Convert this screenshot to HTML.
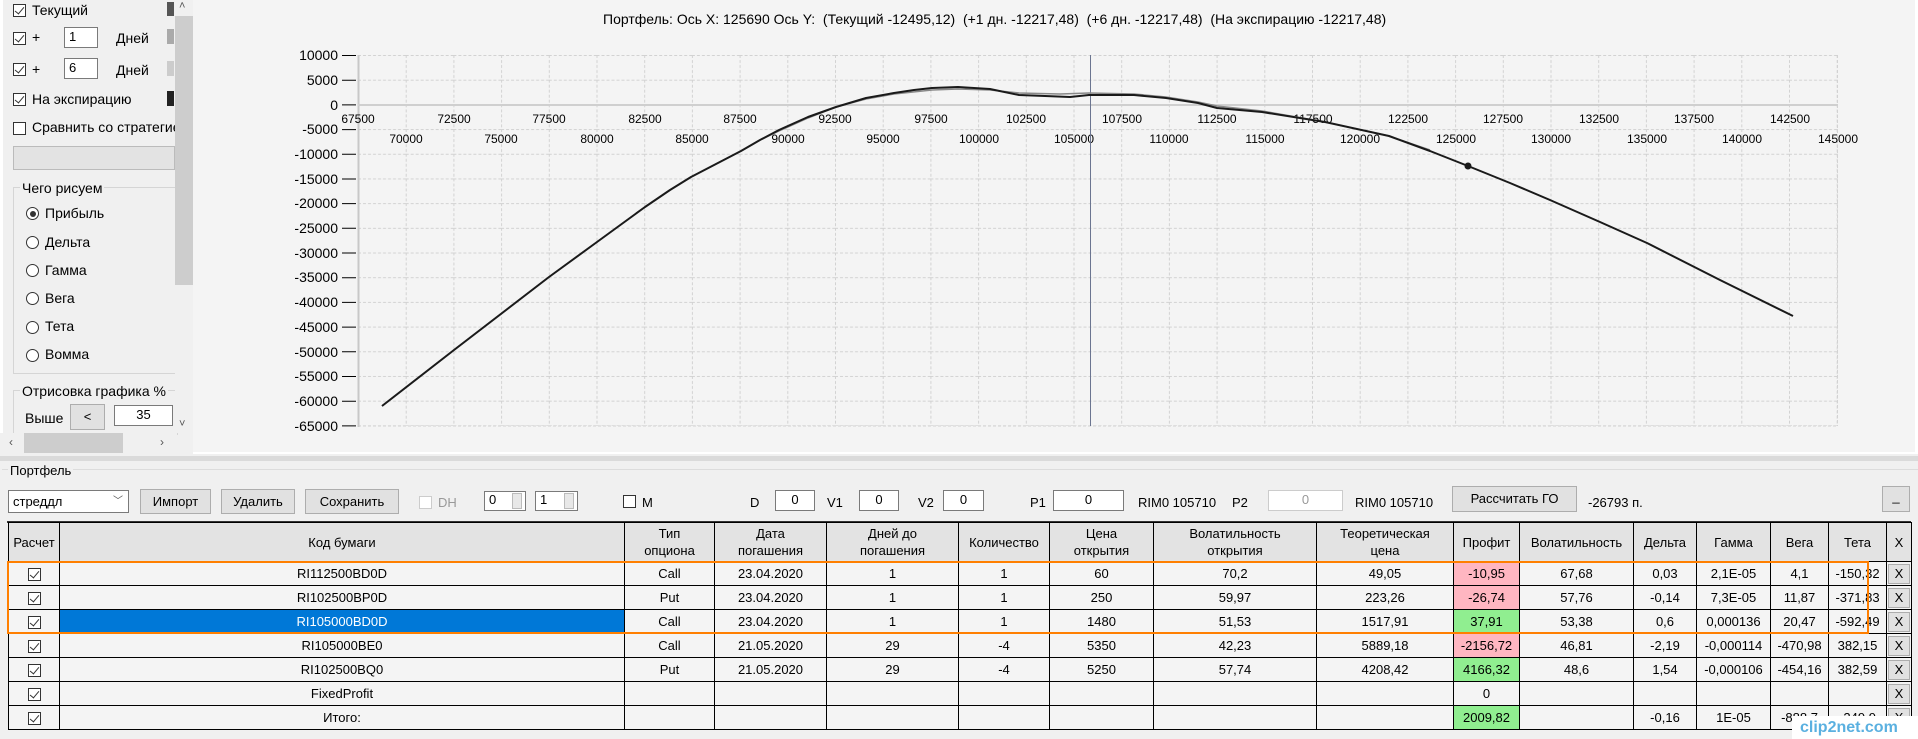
<!DOCTYPE html>
<html><head><meta charset="utf-8"><style>
*{box-sizing:border-box;margin:0;padding:0}
body{width:1918px;height:739px;background:#f0f0f0;font-family:"Liberation Sans",sans-serif;font-size:13px;color:#000;position:relative;overflow:hidden}
.a{position:absolute}
.cb{position:absolute;width:13px;height:13px;border:1px solid #333;background:#fff}
.cb.c::after{content:"";position:absolute;left:3px;top:0px;width:4px;height:8px;border:solid #333;border-width:0 1.3px 1.3px 0;transform:rotate(40deg)}
.rb{position:absolute;width:13px;height:13px;border:1px solid #333;border-radius:50%;background:#fff}
.rb.c::after{content:"";position:absolute;left:2.5px;top:2.5px;width:6px;height:6px;border-radius:50%;background:#333}
.tb{position:absolute;border:1px solid #7a7a7a;background:#fff;font-size:13px;padding-left:4px;line-height:18px}
.btn{position:absolute;border:1px solid #adadad;background:#e1e1e1;text-align:center;font-size:13px}
table{position:absolute;left:8px;top:522px;border-collapse:collapse;table-layout:fixed;font-size:13px}
td{border:1px solid #000;text-align:center;height:24px;background:#f4f4f4;white-space:nowrap;overflow:hidden;padding:0}
tr.h td{background:#e3e3e3;height:39px;line-height:17px}
td.r{background:#ffb6c1}td.g{background:#90ee90}td.s{background:#0078d7;color:#fff}
.ck{display:inline-block;width:13px;height:13px;border:1px solid #333;background:#fff;position:relative;vertical-align:middle}
.ck::after{content:"";position:absolute;left:3px;top:0;width:4px;height:8px;border:solid #333;border-width:0 1.2px 1.2px 0;transform:rotate(40deg)}
.xb{display:block;margin:1px auto;width:22px;height:20px;background:#e1e1e1;border:1px solid #adadad;line-height:18px}
</style></head><body>
<div class="a" style="left:0;top:0;width:175px;height:433px;background:#f0f0f0;border-left:3px solid #fff"></div>
<div class="cb c" style="left:13px;top:4px"></div><div class="a" style="left:32px;top:2px;font-size:14px">Текущий</div>
<div class="a" style="left:167px;top:2px;width:7px;height:14px;background:#555"></div>
<div class="cb c" style="left:13px;top:32px"></div><div class="a" style="left:32px;top:29px;font-size:14px">+</div>
<div class="tb" style="left:64px;top:27px;width:34px;height:21px">1</div><div class="a" style="left:116px;top:30px;font-size:14px">Дней</div>
<div class="a" style="left:167px;top:29px;width:7px;height:15px;background:#aaa"></div>
<div class="cb c" style="left:13px;top:63px"></div><div class="a" style="left:32px;top:61px;font-size:14px">+</div>
<div class="tb" style="left:64px;top:58px;width:34px;height:21px">6</div><div class="a" style="left:116px;top:62px;font-size:14px">Дней</div>
<div class="a" style="left:167px;top:61px;width:7px;height:15px;background:#ccc"></div>
<div class="cb c" style="left:13px;top:93px"></div><div class="a" style="left:32px;top:91px;font-size:14px">На экспирацию</div>
<div class="a" style="left:167px;top:91px;width:7px;height:15px;background:#222"></div>
<div class="cb" style="left:13px;top:122px"></div><div class="a" style="left:32px;top:119px;font-size:14px;white-space:nowrap;width:143px;overflow:hidden">Сравнить со стратегией</div>
<div class="a" style="left:13px;top:146px;width:162px;height:24px;background:#e3e3e3;border:1px solid #bbb"></div>
<div class="a" style="left:13px;top:187px;width:165px;height:187px;border:1px solid #d5d5d5"></div>
<div class="a" style="left:20px;top:180px;background:#f0f0f0;padding:0 2px;font-size:14px">Чего рисуем</div>
<div class="rb c" style="left:26px;top:207px"></div><div class="a" style="left:45px;top:205px;font-size:14px">Прибыль</div>
<div class="rb" style="left:26px;top:236px"></div><div class="a" style="left:45px;top:234px;font-size:14px">Дельта</div>
<div class="rb" style="left:26px;top:264px"></div><div class="a" style="left:45px;top:262px;font-size:14px">Гамма</div>
<div class="rb" style="left:26px;top:292px"></div><div class="a" style="left:45px;top:290px;font-size:14px">Вега</div>
<div class="rb" style="left:26px;top:321px"></div><div class="a" style="left:45px;top:318px;font-size:14px">Тета</div>
<div class="rb" style="left:26px;top:349px"></div><div class="a" style="left:45px;top:346px;font-size:14px">Вомма</div>
<div class="a" style="left:13px;top:390px;width:165px;height:45px;border:1px solid #d5d5d5;border-bottom:none"></div>
<div class="a" style="left:20px;top:383px;background:#f0f0f0;padding:0 2px;font-size:14px">Отрисовка графика %</div>
<div class="a" style="left:25px;top:410px;font-size:14px">Выше</div>
<div class="btn" style="left:70px;top:404px;width:35px;height:26px;line-height:24px">&lt;</div>
<div class="tb" style="left:114px;top:405px;width:59px;height:21px;text-align:center;padding:0">35</div>
<div class="a" style="left:175px;top:0;width:18px;height:433px;background:#f0f0f0"></div>
<div class="a" style="left:175px;top:16px;width:18px;height:269px;background:#cdcdcd"></div>
<div class="a" style="left:179px;top:0;font-size:11px;color:#555">˄</div>
<div class="a" style="left:179px;top:418px;font-size:11px;color:#555">˅</div>
<div class="a" style="left:3px;top:433px;width:172px;height:20px;background:#f0f0f0"></div>
<div class="a" style="left:24px;top:433px;width:99px;height:20px;background:#cdcdcd"></div>
<div class="a" style="left:9px;top:435px;font-size:12px;color:#555">‹</div>
<div class="a" style="left:160px;top:435px;font-size:12px;color:#555">›</div>
<div class="a" style="left:193px;top:0;width:1725px;height:454px;background:#f4f4f4;border-right:3px solid #fff;border-bottom:2px solid #fff"></div>
<div class="a" style="left:603px;top:11px;font-size:14px;white-space:pre">Портфель: Ось X: 125690 Ось Y:  (Текущий -12495,12)  (+1 дн. -12217,48)  (+6 дн. -12217,48)  (На экспирацию -12217,48)</div>
<svg class="a" style="left:0;top:0" width="1918" height="454" font-family="Liberation Sans, sans-serif">
<defs><pattern id="g" x="358" y="55" width="47.7" height="24.69" patternUnits="userSpaceOnUse"><path d="M0.5,0V24.69M0,0.5H47.7" stroke="#d2d2d2" stroke-width="1" stroke-dasharray="3,2" fill="none"/></pattern></defs>
<rect x="358" y="55" width="1480" height="371" fill="url(#g)"/>
<line x1="1837.5" y1="55" x2="1837.5" y2="426" stroke="#d2d2d2" stroke-dasharray="3,2"/>
<line x1="358" y1="426" x2="1838" y2="426" stroke="#d2d2d2" stroke-dasharray="3,2"/>
<line x1="358.5" y1="55" x2="358.5" y2="427" stroke="#c8c8c8" stroke-width="2"/>
<line x1="358" y1="105" x2="1838" y2="105" stroke="#cfcfcf" stroke-width="2"/>
<g stroke="#000" stroke-width="1">
<path d="M342,55.5H356M342,80.2H356M342,104.9H356M342,129.6H356M342,154.3H356M342,179H356M342,203.6H356M342,228.3H356M342,253H356M342,277.7H356M342,302.4H356M342,327.1H356M342,351.8H356M342,376.5H356M342,401.2H356M342,425.9H356"/>
</g>
<g font-size="14" text-anchor="end">
<text x="338" y="60">10000</text><text x="338" y="85">5000</text><text x="338" y="110">0</text><text x="338" y="134">-5000</text><text x="338" y="159">-10000</text><text x="338" y="184">-15000</text><text x="338" y="208">-20000</text><text x="338" y="233">-25000</text><text x="338" y="258">-30000</text><text x="338" y="282">-35000</text><text x="338" y="307">-40000</text><text x="338" y="332">-45000</text><text x="338" y="357">-50000</text><text x="338" y="381">-55000</text><text x="338" y="406">-60000</text><text x="338" y="431">-65000</text>
</g>
<g font-size="12" text-anchor="middle">
<text x="358" y="123">67500</text><text x="454" y="123">72500</text><text x="549" y="123">77500</text><text x="645" y="123">82500</text><text x="740" y="123">87500</text><text x="835" y="123">92500</text><text x="931" y="123">97500</text><text x="1026" y="123">102500</text><text x="1122" y="123">107500</text><text x="1217" y="123">112500</text><text x="1313" y="123">117500</text><text x="1408" y="123">122500</text><text x="1503" y="123">127500</text><text x="1599" y="123">132500</text><text x="1694" y="123">137500</text><text x="1790" y="123">142500</text>
<text x="406" y="143">70000</text><text x="501" y="143">75000</text><text x="597" y="143">80000</text><text x="692" y="143">85000</text><text x="788" y="143">90000</text><text x="883" y="143">95000</text><text x="979" y="143">100000</text><text x="1074" y="143">105000</text><text x="1169" y="143">110000</text><text x="1265" y="143">115000</text><text x="1360" y="143">120000</text><text x="1456" y="143">125000</text><text x="1551" y="143">130000</text><text x="1647" y="143">135000</text><text x="1742" y="143">140000</text><text x="1838" y="143">145000</text>
</g>
<line x1="1090.5" y1="55" x2="1090.5" y2="426" stroke="#6b7590" stroke-width="1"/>
<path d="M382,406 L454,350 L549,277 L597,242 L645,207 L670,190 L691,177 L716,164 L741,151 L760,140 L779,131 L808,118 L836,107 L866,99 L894,94 L932,90 L958,89 L990,90 L1019,93 L1060,94 L1089,93 L1134,94 L1166,97 L1198,102 L1217,106 L1262,111 L1325,122 L1389,136 L1430,150" fill="none" stroke="#888" stroke-width="1.5"/>
<path d="M382,406 L454,350 L549,277 L597,242 L645,207 L670,190 L691,177 L716,164 L741,151 L760,140 L779,130 L808,117 L836,107 L866,98 L894,93 L914,90 L932,88 L958,87 L990,89 L1019,95 L1045,96 L1070,97 L1089,95 L1134,95 L1166,98 L1198,103 L1217,108 L1262,112 L1325,122 L1389,136 L1430,151 L1468,166 L1510,183 L1550,200 L1600,222 L1647,243 L1720,280 L1793,316" fill="none" stroke="#1a1a1a" stroke-width="2" stroke-linejoin="round"/>
<circle cx="1468" cy="166" r="3.5" fill="#1a1a1a"/>
</svg>
<div class="a" style="left:0;top:456px;width:1918px;height:5px;background:#dadada"></div>
<div class="a" style="left:2px;top:469px;width:1916px;height:270px;border-top:1px solid #dcdcdc"></div>
<div class="a" style="left:8px;top:463px;background:#f0f0f0;padding:0 2px;font-size:13px">Портфель</div>
<div class="tb" style="left:8px;top:490px;width:121px;height:23px;line-height:21px">стреддл<span style="position:absolute;right:5px;font-size:10px;color:#555">﹀</span></div>
<div class="btn" style="left:140px;top:489px;width:71px;height:25px;line-height:23px">Импорт</div>
<div class="btn" style="left:221px;top:489px;width:74px;height:25px;line-height:23px">Удалить</div>
<div class="btn" style="left:305px;top:489px;width:94px;height:25px;line-height:23px">Сохранить</div>
<div class="cb" style="left:419px;top:496px;border-color:#ccc"></div><div class="a" style="left:438px;top:495px;color:#999">DH</div>
<div class="tb" style="left:484px;top:491px;width:42px;height:20px;line-height:16px">0</div>
<div class="tb" style="left:535px;top:491px;width:43px;height:20px;line-height:16px">1</div>
<div class="a" style="left:512px;top:493px;width:10px;height:16px;background:#e8e8e8;border:1px solid #bbb"></div>
<div class="a" style="left:564px;top:493px;width:10px;height:16px;background:#e8e8e8;border:1px solid #bbb"></div>
<div class="cb" style="left:623px;top:495px"></div><div class="a" style="left:642px;top:495px">M</div>
<div class="a" style="left:750px;top:495px">D</div><div class="tb" style="left:775px;top:490px;width:40px;height:21px;text-align:center;padding:0">0</div>
<div class="a" style="left:827px;top:495px">V1</div><div class="tb" style="left:859px;top:490px;width:40px;height:21px;text-align:center;padding:0">0</div>
<div class="a" style="left:918px;top:495px">V2</div><div class="tb" style="left:943px;top:490px;width:41px;height:21px;text-align:center;padding:0">0</div>
<div class="a" style="left:1030px;top:495px">P1</div><div class="tb" style="left:1053px;top:490px;width:71px;height:21px;text-align:center;padding:0">0</div>
<div class="a" style="left:1138px;top:495px">RIM0 105710</div>
<div class="a" style="left:1232px;top:495px">P2</div><div class="tb" style="left:1268px;top:490px;width:75px;height:21px;text-align:center;padding:0;border-color:#ccc;color:#999">0</div>
<div class="a" style="left:1355px;top:495px">RIM0 105710</div>
<div class="btn" style="left:1452px;top:486px;width:125px;height:26px;line-height:23px">Рассчитать ГО</div>
<div class="a" style="left:1588px;top:495px">-26793 п.</div>
<div class="btn" style="left:1882px;top:486px;width:28px;height:26px;line-height:20px">_</div>
<div class="a" style="left:7px;top:521px;width:1904px;height:2px;background:#333"></div>
<table>
<colgroup><col style="width:51px"><col style="width:565px"><col style="width:90px"><col style="width:112px"><col style="width:132px"><col style="width:91px"><col style="width:104px"><col style="width:163px"><col style="width:137px"><col style="width:66px"><col style="width:114px"><col style="width:63px"><col style="width:74px"><col style="width:58px"><col style="width:58px"><col style="width:25px"></colgroup>
<tr class="h"><td>Расчет</td><td>Код бумаги</td><td>Тип<br>опциона</td><td>Дата<br>погашения</td><td>Дней до<br>погашения</td><td>Количество</td><td>Цена<br>открытия</td><td>Волатильность<br>открытия</td><td>Теоретическая<br>цена</td><td>Профит</td><td>Волатильность</td><td>Дельта</td><td>Гамма</td><td>Вега</td><td>Тета</td><td>X</td></tr>
<tr><td><span class="ck"></span></td><td>RI112500BD0D</td><td>Call</td><td>23.04.2020</td><td>1</td><td>1</td><td>60</td><td>70,2</td><td>49,05</td><td class="r">-10,95</td><td>67,68</td><td>0,03</td><td>2,1E-05</td><td>4,1</td><td>-150,32</td><td><span class="xb">X</span></td></tr>
<tr><td><span class="ck"></span></td><td>RI102500BP0D</td><td>Put</td><td>23.04.2020</td><td>1</td><td>1</td><td>250</td><td>59,97</td><td>223,26</td><td class="r">-26,74</td><td>57,76</td><td>-0,14</td><td>7,3E-05</td><td>11,87</td><td>-371,83</td><td><span class="xb">X</span></td></tr>
<tr><td><span class="ck"></span></td><td class="s">RI105000BD0D</td><td>Call</td><td>23.04.2020</td><td>1</td><td>1</td><td>1480</td><td>51,53</td><td>1517,91</td><td class="g">37,91</td><td>53,38</td><td>0,6</td><td>0,000136</td><td>20,47</td><td>-592,49</td><td><span class="xb">X</span></td></tr>
<tr><td><span class="ck"></span></td><td>RI105000BE0</td><td>Call</td><td>21.05.2020</td><td>29</td><td>-4</td><td>5350</td><td>42,23</td><td>5889,18</td><td class="r">-2156,72</td><td>46,81</td><td>-2,19</td><td>-0,000114</td><td>-470,98</td><td>382,15</td><td><span class="xb">X</span></td></tr>
<tr><td><span class="ck"></span></td><td>RI102500BQ0</td><td>Put</td><td>21.05.2020</td><td>29</td><td>-4</td><td>5250</td><td>57,74</td><td>4208,42</td><td class="g">4166,32</td><td>48,6</td><td>1,54</td><td>-0,000106</td><td>-454,16</td><td>382,59</td><td><span class="xb">X</span></td></tr>
<tr><td><span class="ck"></span></td><td>FixedProfit</td><td></td><td></td><td></td><td></td><td></td><td></td><td></td><td>0</td><td></td><td></td><td></td><td></td><td></td><td><span class="xb">X</span></td></tr>
<tr><td><span class="ck"></span></td><td>Итого:</td><td></td><td></td><td></td><td></td><td></td><td></td><td></td><td class="g">2009,82</td><td></td><td>-0,16</td><td>1E-05</td><td>-888,7</td><td>-249,9</td><td><span class="xb">X</span></td></tr>
</table>
<div class="a" style="left:7px;top:561px;width:1862px;height:73px;border:2px solid #ff7f00"></div>
<div class="a" style="left:1792px;top:716px;width:126px;height:23px;background:#fff;color:#5ab0e0;font-size:16px;font-weight:bold;padding-left:8px;line-height:23px;overflow:hidden;white-space:nowrap">clip2net.com</div>
</body></html>
